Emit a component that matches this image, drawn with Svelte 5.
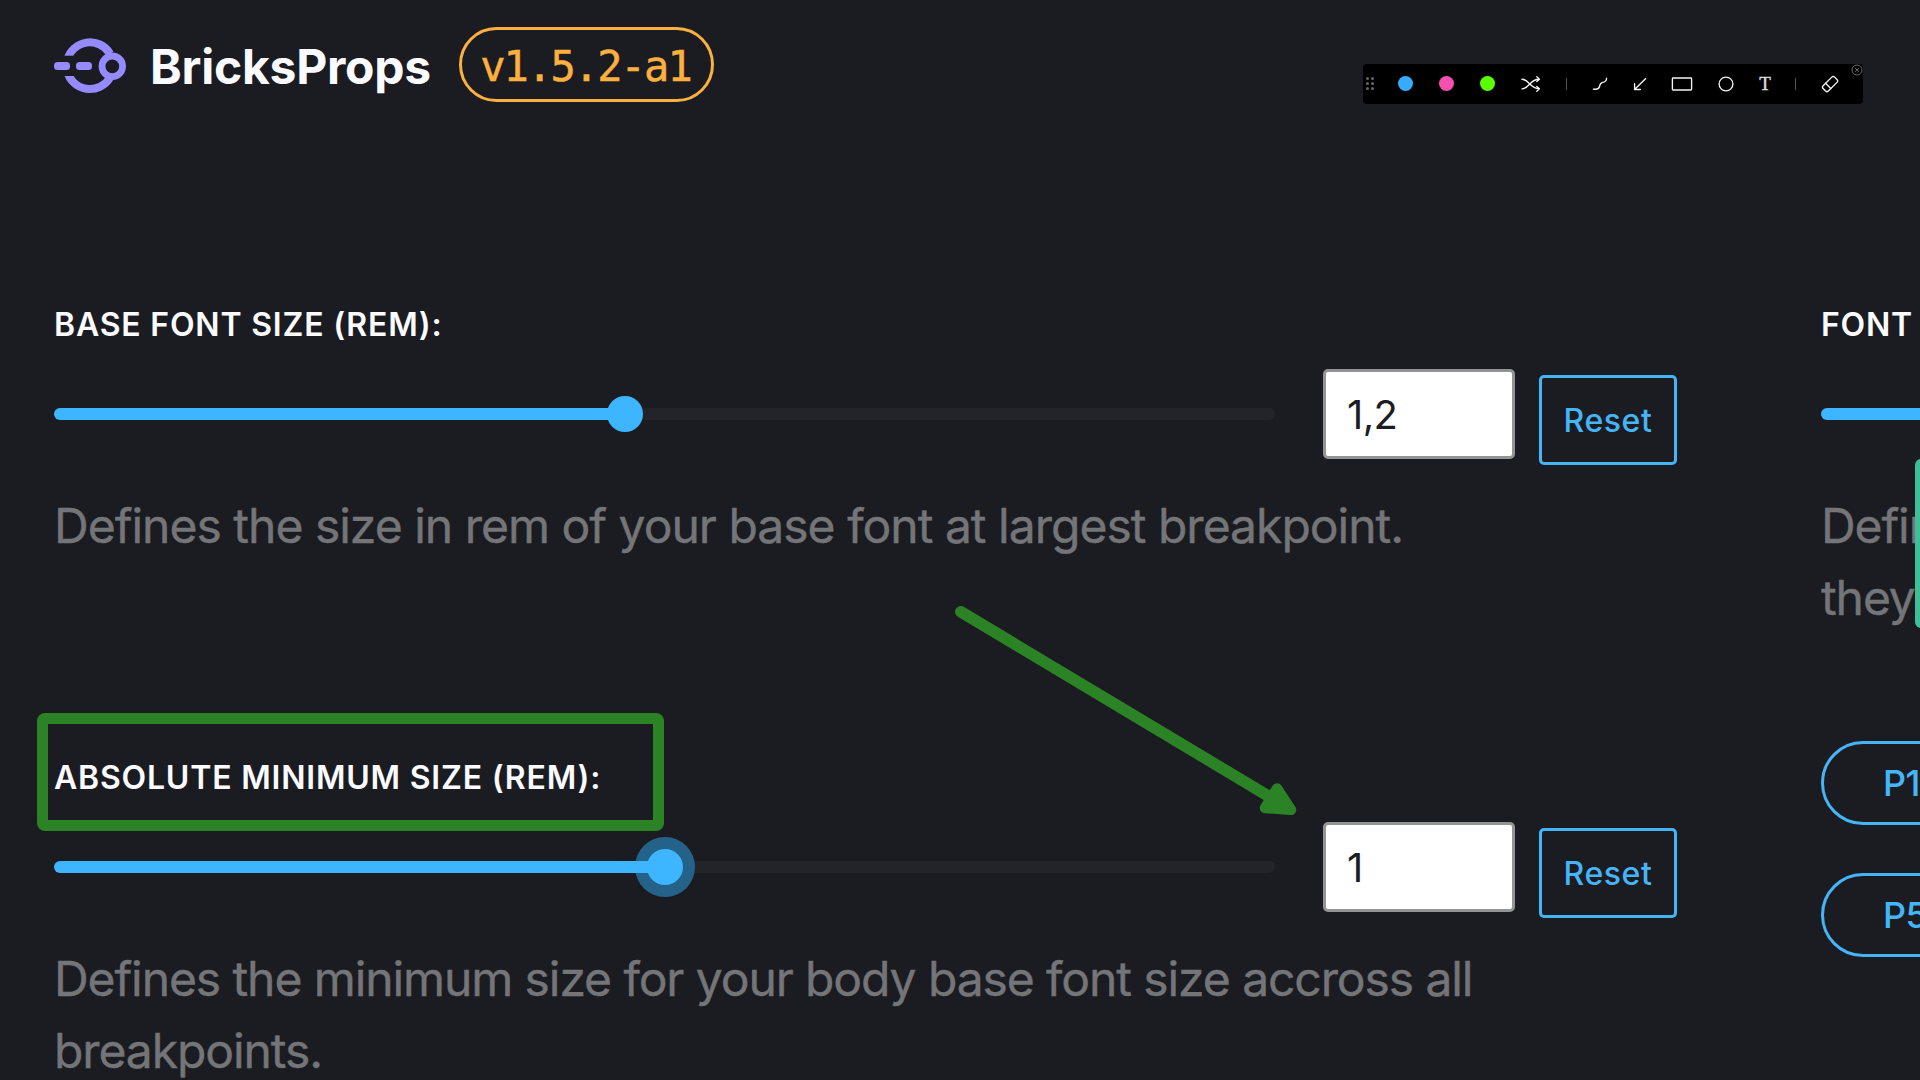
<script>
  const fields = [
    {
      id: 'base',
      label: 'Base font size (rem):',
      value: '1,2',
      percent: 46.8,
      active: false,
      lines: ['Defines the size in rem of your base font at largest breakpoint.']
    },
    {
      id: 'minimum',
      label: 'Absolute minimum size (rem):',
      value: '1',
      percent: 50,
      active: true,
      lines: ['Defines the minimum size for your body base font size accross all', 'breakpoints.']
    }
  ];
  const swatches = ['blue', 'pink', 'green'];
  const dots = [0, 1, 2, 3, 4, 5];
  const presets = ['P1', 'P5'];
</script>

<div class="page">
  <header>
    <svg class="logo" width="72" height="56" viewBox="0 0 72 56" fill="none">
      <path d="M13.2 22.5A23.4 23.4 0 0 1 56 15.6M13.2 33A23.4 23.4 0 0 0 56 39.8" stroke="#968aff" stroke-width="8" />
      <rect x="6" y="17.7" width="14" height="20.3" fill="#1b1c21" />
      <circle cx="58.3" cy="28.3" r="10.3" stroke="#968aff" stroke-width="6.8" />
      <rect x="0" y="24" width="16" height="8" rx="3.5" fill="#968aff" />
      <rect x="22" y="24" width="16" height="8" rx="3.5" fill="#968aff" />
    </svg>
    <h1>BricksProps</h1>
    <span class="version">v1.5.2-a1</span>
  </header>

  <main>
    <section class="column">
      {#each fields as field (field.id)}
        <div class="field {field.id}">
          <div class="label">
            {field.label}
            {#if field.active}<span class="frame"></span>{/if}
          </div>
          <div class="controls">
            <div class="track">
              <div class="fill" style="width: {field.percent}%">
                <span class="thumb" class:active={field.active}></span>
              </div>
            </div>
            <input type="text" value={field.value} aria-label={field.label} />
            <button class="reset">Reset</button>
          </div>
          <p>
            {#each field.lines as line}<span>{line}</span>{/each}
          </p>
        </div>
      {/each}
    </section>

    <section class="column side">
      <div class="field">
        <div class="label">Font</div>
        <div class="controls">
          <div class="track"><div class="fill full"></div></div>
        </div>
        <p><span>Defin</span><span>they</span></p>
      </div>
      <div class="presets">
        {#each presets as preset}<button class="pill">{preset}</button>{/each}
      </div>
    </section>
  </main>

  <div class="drawer"></div>

  <svg class="arrow" width="360" height="230" viewBox="945 595 360 230">
    <path d="M960.8 611.8L1280 803" stroke="#2c8326" stroke-width="11.5" stroke-linecap="round" />
    <path d="M1277 788.5L1291 809.8L1265 808Z" fill="#2c8326" stroke="#2c8326" stroke-width="10.5" stroke-linejoin="round" />
  </svg>

  <div class="toolbar">
    <span class="grip">{#each dots as dot}<i></i>{/each}</span>
    {#each swatches as swatch}<span class="swatch {swatch}"></span>{/each}
    <svg width="20" height="16" viewBox="0 0 20 16" class="icon">
      <path d="M1 3.2C8 3.2 9 12.8 18 12.8M1 12.8C8 12.8 9 3.2 18 3.2M15.8 .8L18.4 3.2L15.8 5.6M15.8 10.4L18.4 12.8L15.8 15.2" />
    </svg>
    <span class="divider"></span>
    <svg width="16" height="16" viewBox="0 0 16 16" class="icon">
      <path d="M1.3 13.1C4.8 13.7 6.8 13.2 7.5 10.5C8 8.3 8.2 6.8 10.8 6.4C13.4 6.1 14.4 4.8 14.6 2.3" />
    </svg>
    <svg width="16" height="16" viewBox="0 0 16 16" class="icon">
      <path d="M13.7 2.4L2.6 13.5M2.6 7.7V13.5H8.4" />
    </svg>
    <svg width="22" height="16" viewBox="0 0 22 16" class="icon">
      <rect x="1.4" y="2" width="19.2" height="12" rx=".8" />
    </svg>
    <svg width="16" height="16" viewBox="0 0 16 16" class="icon"><circle cx="8" cy="8" r="6.9" /></svg>
    <span class="text-tool">T</span>
    <span class="divider"></span>
    <svg width="18" height="18" viewBox="0 0 18 18" class="icon">
      <rect x="0.9" y="5.4" width="16.2" height="7.4" rx="2" transform="rotate(-45 9 9)" />
      <path d="M4.6 8.3L9.8 13.5" />
    </svg>
    <svg class="close" width="12" height="12" viewBox="0 0 12 12">
      <circle cx="6" cy="6" r="5" /><path d="M4 4L8 8M8 4L4 8" />
    </svg>
  </div>
</div>

<style>
  :global(body) { margin: 0; background: #1b1c21; }
  .page {
    position: relative;
    box-sizing: border-box;
    width: 1920px;
    height: 1080px;
    overflow: hidden;
    padding: 27px 0 0 54px;
    background: #1b1c21;
    font-family: Inter, sans-serif;
  }
  header { display: flex; align-items: center; height: 75px; }
  .logo { display: block; padding-top: 3px; flex: none; }
  h1 {
    margin: 0 0 0 24px;
    padding-top: 4px;
    width: 309px;
    font-size: 48px;
    line-height: 72px;
    font-weight: 700;
    letter-spacing: -0.25px;
    color: #fafaff;
  }
  .version {
    box-sizing: border-box;
    width: 255px;
    height: 75px;
    padding-right: 2px;
    border: 3px solid #fbb03f;
    border-radius: 38px;
    text-align: center;
    font: 42px/74px "DejaVu Sans Mono", monospace;
    letter-spacing: -1.88px;
    -webkit-text-stroke: 0.5px #fbb03f;
    color: #fbb03f;
  }
  main { display: flex; gap: 144px; padding-top: 199px; }
  .column { width: 1623px; flex: none; display: flex; flex-direction: column; gap: 191px; }
  .side { gap: 107px; }
  .label {
    position: relative;
    height: 48px;
    font-size: 32px;
    line-height: 48px;
    font-weight: 600;
    letter-spacing: 0.8px;
    text-transform: uppercase;
    white-space: nowrap;
    color: #fafaff;
  }
  .frame {
    position: absolute;
    left: -17px;
    top: -41px;
    box-sizing: border-box;
    width: 627px;
    height: 118px;
    border: 11px solid #2c8326;
    border-radius: 8px;
  }
  .controls { display: flex; align-items: flex-start; height: 96px; margin-top: 20px; }
  .field { height: 262px; }
  .side .field { height: 333px; }
  .track {
    position: relative;
    z-index: 0;
    flex: 1;
    height: 12px;
    margin: 39px 48px 0 0;
    border-radius: 6px;
    background: #232429;
  }
  .fill {
    position: relative;
    height: 12px;
    border-radius: 6px;
    background: #3db5ff;
    display: flex;
    align-items: center;
    justify-content: flex-end;
  }
  .full { width: 100%; }
  .thumb { flex: none; width: 36px; height: 36px; margin-right: -18px; border-radius: 50%; background: #3db5ff; }
  .thumb.active { position: relative; }
  .thumb.active::before {
    content: "";
    position: absolute;
    z-index: -1;
    inset: -12px;
    border-radius: 50%;
    background: #25628a;
  }
  input {
    box-sizing: border-box;
    width: 192px;
    height: 90px;
    margin: 0 24px 0 0;
    padding: 1px 21px 0;
    border: 3px solid #949494;
    border-radius: 5px;
    background: #fff;
    font: 400 40px Inter, sans-serif;
    letter-spacing: -0.6px;
    color: #1c1d22;
  }
  button { box-sizing: border-box; padding: 0; background: none; border: 3px solid #45b5f8; color: #45b5f8; font-family: Inter, sans-serif; }
  .reset { width: 138px; height: 90px; margin-top: 6px; border-radius: 5px; font-size: 32px; letter-spacing: 0.6px; font-weight: 500; }
  p {
    margin: 25px 0 0;
    font-size: 48px;
    line-height: 72px;
    letter-spacing: -1.09px;
    -webkit-text-stroke: 0.4px #747578;
    color: #747578;
    white-space: nowrap;
  }
  .base p { letter-spacing: -0.99px; }
  p span { display: block; }
  .presets { display: flex; flex-direction: column; gap: 48px; }
  .pill { width: 240px; height: 84px; border-radius: 42px; padding: 0 0 1px 59px; text-align: left; font-size: 36px; font-weight: 500; letter-spacing: -0.5px; }
  .drawer { position: absolute; left: 1915px; top: 459px; width: 20px; height: 169px; border-radius: 6px; background: #3fbf98; }
  .arrow { position: absolute; left: 945px; top: 595px; fill: none; }
  .toolbar {
    position: absolute;
    left: 1363px;
    top: 64px;
    box-sizing: border-box;
    width: 500px;
    height: 40px;
    padding-bottom: 1px;
    border-radius: 4px;
    background: #000;
    display: grid;
    grid-template-columns: 14px 57px 25.4px 56.2px 30.8px 40.2px 26.8px 53.2px 30.8px 57.2px 20.8px 40.2px 28.8px;
    align-items: center;
    justify-items: center;
  }
  .icon { fill: none; stroke: #f4f4f4; stroke-width: 1.35; stroke-linecap: round; stroke-linejoin: round; }
  .grip { display: grid; grid-template-columns: 3px 3px; gap: 2px; }
  .grip i { width: 3px; height: 3px; border-radius: 50%; background: #666; }
  .swatch { width: 15px; height: 15px; border-radius: 50%; }
  .blue { background: #35acff; }
  .pink { background: #f54fb0; }
  .green { background: #5bff00; }
  .divider { width: 1px; height: 12px; background: #555; }
  .text-tool { font: 19px/20px "Liberation Serif", serif; color: #ddd; -webkit-text-stroke: 0.4px #ddd; }
  .close { position: absolute; right: 0; top: 0; fill: none; stroke: #666; stroke-width: 1; }
</style>
